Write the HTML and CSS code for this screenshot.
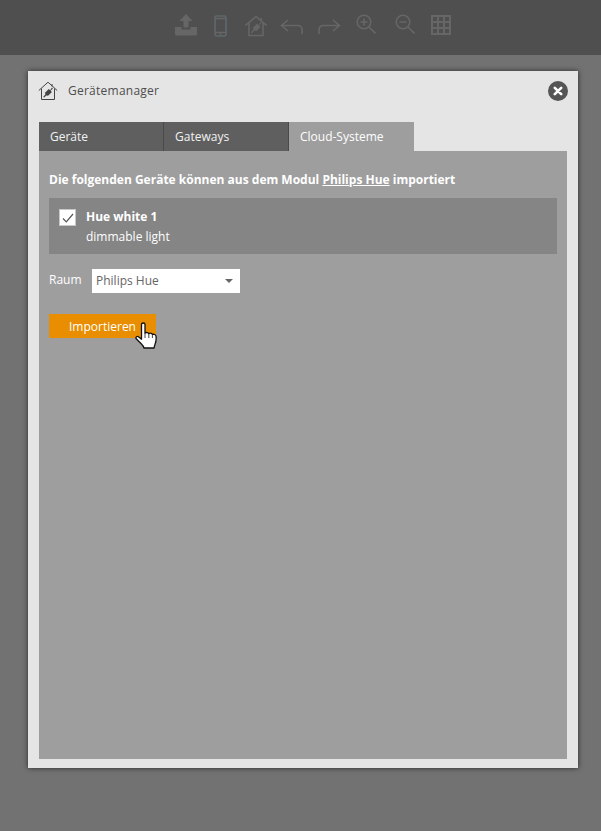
FILE: index.html
```html
<!DOCTYPE html>
<html lang="de">
<head>
<meta charset="utf-8">
<title>Gerätemanager</title>
<link rel="stylesheet" href="styles.css">
</head>
<body>
<header class="toolbar">
  <svg class="tool t-upload" width="22" height="22" viewBox="0 0 22 22"><path class="fill" d="M11 0l6.500 7H13.500v6.500h-5V7H4.500z"/><path class="fill" d="M0 13h6.500v2.500h9V13H22v7a1.500 1.500 0 0 1-1.500 1.500h-19A1.500 1.500 0 0 1 0 20z"/></svg>
  <svg class="tool t-phone" width="13" height="22" viewBox="0 0 13 22"><rect class="phone" x="1" y="1" width="11" height="20" rx="1.500"/><path class="line" d="M1 3.500h11M1 17.500h11"/><circle class="fill" cx="6.500" cy="19.300" r="1"/></svg>
  <svg class="tool t-home" width="22" height="22" viewBox="0 0 22 22"><path class="line" d="M.5 10.500L11 1.500l10.500 9M4 8V20.500h14V8M16 3v2.500"/><path class="fill" d="M15.500 7l1 1-2.500 2.500 1.500 1.500-4 4-2-.4-2.600 2.600-1-1 2.600-2.600-.4-2 4-4 1.500 1.500z"/></svg>
  <svg class="tool t-undo" width="23" height="16" viewBox="0 0 23 16"><path class="line" d="M8 1L1.500 6.500 8 12M1.500 6.500H18a4 4 0 0 1 4 4V15"/></svg>
  <svg class="tool t-redo" width="23" height="16" viewBox="0 0 23 16"><path class="line" d="M15 1l6.500 5.500L15 12M21.500 6.500H5a4 4 0 0 0-4 4V15"/></svg>
  <svg class="tool t-in" width="20" height="20" viewBox="0 0 20 20"><circle class="line" cx="8" cy="8" r="6.800"/><path class="line" d="M13 13l6.500 6.500M8 4.500v7M4.500 8h7"/></svg>
  <svg class="tool t-out" width="20" height="20" viewBox="0 0 20 20"><circle class="line" cx="8" cy="8" r="6.800"/><path class="line" d="M13 13l6.500 6.500M4.500 8h7"/></svg>
  <svg class="tool t-grid" width="20" height="20" viewBox="0 0 20 20"><path class="grid" d="M1 1h18v18H1zM7 1v18M13 1v18M1 7h18M1 13h18"/></svg>
</header>

<main class="dialog">
  <div class="dialog-head">
    <svg class="head-icon" width="20" height="20" viewBox="0 0 20 20"><path class="hl" d="M.8 9.500L10 1.200l9.200 8.300M3.500 7.500V18.500h13V7.500M14 3v2.500"/><path class="hf" d="M14 6.500l.9.900-2.300 2.300 1.300 1.300-3.800 3.800-1.800-.4-2.200 2.200-.9-.9 2.200-2.200-.4-1.800 3.800-3.800 1.300 1.300z"/></svg>
    <h1 class="dialog-title">Gerätemanager</h1>
    <button class="close" type="button" aria-label="Schließen"><svg width="10" height="10" viewBox="0 0 10 10"><path class="x" d="M1.800 1.800l6.400 6.400M8.200 1.800L1.800 8.200"/></svg></button>
  </div>

  <nav class="tabs">
    <span class="tab">Geräte</span>
    <span class="tab">Gateways</span>
    <span class="tab active">Cloud-Systeme</span>
  </nav>

  <section class="panel">
    <p class="intro">Die folgenden Geräte können aus dem Modul <u>Philips Hue</u> importiert</p>
    <div class="device">
      <span class="check"><svg width="12" height="10" viewBox="0 0 12 10"><path class="tick" d="M1 5.500l3.300 3.300L11 1"/></svg></span>
      <div class="device-text">
        <strong class="device-name">Hue white 1</strong>
        <span class="device-type">dimmable light</span>
      </div>
    </div>
    <div class="room">
      <label class="room-label">Raum</label>
      <div class="select"><span>Philips Hue</span><i class="caret"></i></div>
    </div>
    <div class="actions">
      <button class="import" type="button">Importieren</button>
      <svg class="cursor" width="23" height="29" viewBox="0 0 23 29"><path class="hand" d="M6.500 2.500C6.500 .5 10 .5 10 2.500V11c1.500-.8 3.200-.6 3.800.6 1.400-.7 3-.4 3.600.8 1.500-.5 3.400.2 3.600 1.800.3 2.500.1 5.500-1 8.300-.5 1.200-.8 2-.9 3.500H9c-.4-2-2-3.500-3.500-5L1.200 16.800c-1-1.400 1.200-3.200 2.600-1.800l2.700 2.200z"/><path class="hand-l" d="M10 11v5M13.800 11.600V16M17.400 12.400V16"/></svg>
    </div>
  </section>
</main>
</body>
</html>
```
FILE: styles.css
```css
* { box-sizing: border-box; }
html, body { height: 100%; }
body {
  margin: 0;
  background: #727272;
  font-family: "Open Sans", "Liberation Sans", sans-serif;
  font-size: 12px;
  overflow: hidden;
}

/* Toolbar */
.toolbar {
  height: 55px;
  background: #4f4f4f;
  position: relative;
  display: flex;
  align-items: flex-start;
  padding-left: 175px;
}
.tool { flex: none; }
.t-upload { margin-top: 14px; }
.t-phone { margin-top: 15px; margin-left: 17px; }
.t-home { margin-top: 15px; margin-left: 18px; }
.t-undo { margin-top: 19px; margin-left: 13px; }
.t-redo { margin-top: 19px; margin-left: 15px; }
.t-in { margin-top: 14px; margin-left: 15px; }
.t-out { margin-top: 14px; margin-left: 19px; }
.t-grid { margin-top: 15px; margin-left: 16px; }
.line { fill: none; stroke: #666; stroke-width: 1.600; }
.fill { fill: #666; }
.phone { fill: none; stroke: #5f686e; stroke-width: 1.600; }
.grid { fill: none; stroke: #666; stroke-width: 2; }

/* Dialog */
.dialog {
  width: 550px;
  height: 697px;
  margin: 16px 0 0 28px;
  background: #e5e5e5;
  box-shadow: 0 0 5px rgba(0, 0, 0, .65);
  padding: 0 11px 9px;
  display: flex;
  flex-direction: column;
}
.dialog-head {
  height: 51px;
  flex: none;
  display: flex;
  align-items: center;
  padding-bottom: 12px;
}
.head-icon { flex: none; margin: 0 10px 0 -1px; }
.hl { fill: none; stroke: #444; stroke-width: 1; }
.hf { fill: #444; }
.dialog-title {
  margin: 0;
  font-size: 12px;
  font-weight: 400;
  letter-spacing: .25px;
  color: #4d4d4d;
  flex: 1;
}
.close {
  width: 20px;
  height: 20px;
  margin-right: -1px;
  padding: 0;
  border: 0;
  border-radius: 50%;
  background: #555;
  display: flex;
  align-items: center;
  justify-content: center;
}
.x { fill: none; stroke: #fff; stroke-width: 2.600; stroke-linecap: round; }

/* Tabs */
.tabs { display: flex; height: 29px; flex: none; }
.tab {
  width: 125px;
  background: #5f5f5f;
  border-right: 1px solid #4a4a4a;
  color: #f2f2f2;
  line-height: 29px;
  padding-left: 11px;
  font-size: 12px;
}
.tab.active {
  width: 125px;
  background: #9e9e9e;
  border-right: 0;
  color: #fff;
}

/* Panel */
.panel {
  flex: 1;
  background: #9e9e9e;
  padding: 20px 10px 0;
  color: #fff;
}
.intro {
  margin: 0 0 10px;
  font-size: 12px;
  font-weight: 700;
  line-height: 17px;
}
.device {
  height: 56px;
  background: #858585;
  padding: 11px 11px 0 10px;
  display: flex;
  gap: 10px;
}
.check {
  width: 17px;
  height: 17px;
  flex: none;
  background: #fff;
  border: 1px solid #c8c8c8;
  display: flex;
  align-items: center;
  justify-content: center;
}
.tick { fill: none; stroke: #555; stroke-width: 1.200; }
.device-text { display: flex; flex-direction: column; line-height: 19px; margin-top: -2px; }
.device-name { font-weight: 700; font-size: 12px; }
.device-type { font-size: 12px; margin-top: 1px; }
.room {
  display: flex;
  align-items: center;
  margin-top: 15px;
  height: 24px;
}
.room-label { width: 43px; font-size: 12px; margin-top: -3px; }
.select {
  width: 148px;
  height: 24px;
  background: #fff;
  color: #666;
  font-size: 12px;
  line-height: 24px;
  padding-left: 4px;
  position: relative;
}
.caret {
  position: absolute;
  right: 7px;
  top: 10px;
  border-left: 4px solid transparent;
  border-right: 4px solid transparent;
  border-top: 4px solid #666;
}
.actions { position: relative; margin-top: 21px; }
.import {
  display: block;
  width: 107px;
  height: 24px;
  padding: 0 0 0 20px;
  border: 0;
  background: #e88e00;
  color: #fff;
  font-family: inherit;
  font-size: 12px;
  text-align: left;
}
.cursor { position: absolute; left: 86px; top: 8px; }
.hand { fill: #fff; stroke: #111; stroke-width: 1.300; stroke-linejoin: round; }
.hand-l { fill: none; stroke: #111; stroke-width: .8; }
```
